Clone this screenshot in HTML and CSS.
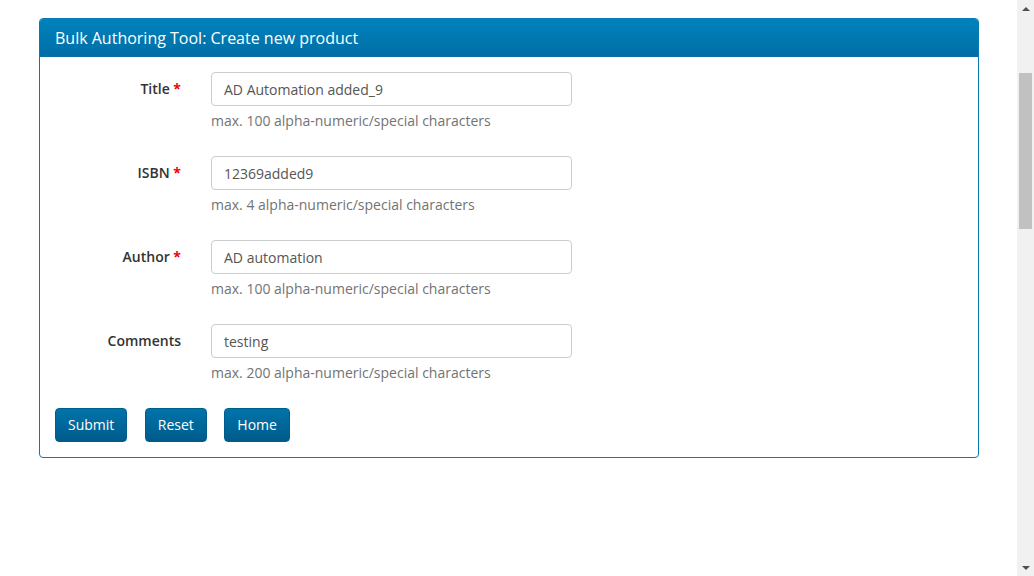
FILE: index.html
```html
<!DOCTYPE html>
<html>
<head>
<meta charset="utf-8">
<link rel="stylesheet" href="styles.css">
</head>
<body>
<div class="page">
  <div class="container">
    <div class="panel">
      <div class="panel-heading">Bulk Authoring Tool: Create new product</div>
      <div class="panel-body">
        <div class="form-group">
          <label class="control-label">Title <span class="req">*</span></label>
          <div class="field">
            <input class="form-control" type="text" value="AD Automation added_9">
            <span class="help-block">max. 100 alpha-numeric/special characters</span>
          </div>
        </div>
        <div class="form-group">
          <label class="control-label">ISBN <span class="req">*</span></label>
          <div class="field">
            <input class="form-control" type="text" value="12369added9">
            <span class="help-block">max. 4 alpha-numeric/special characters</span>
          </div>
        </div>
        <div class="form-group">
          <label class="control-label">Author <span class="req">*</span></label>
          <div class="field">
            <input class="form-control" type="text" value="AD automation">
            <span class="help-block">max. 100 alpha-numeric/special characters</span>
          </div>
        </div>
        <div class="form-group">
          <label class="control-label">Comments</label>
          <div class="field">
            <input class="form-control" type="text" value="testing">
            <span class="help-block">max. 200 alpha-numeric/special characters</span>
          </div>
        </div>
        <div class="actions">
          <button class="btn" type="button">Submit</button>
          <button class="btn" type="button">Reset</button>
          <button class="btn" type="button">Home</button>
        </div>
      </div>
    </div>
  </div>
</div>
<div class="scrollbar">
  <div class="sb-btn"><span class="arrow-up"></span></div>
  <div class="sb-track"><div class="sb-thumb"></div></div>
  <div class="sb-btn"><span class="arrow-down"></span></div>
</div>
</body>
</html>
```

FILE: styles.css
```css
html, body {
  margin: 0;
  padding: 0;
  height: 100%;
  overflow: hidden;
}
body {
  display: flex;
  font-family: "Open Sans", "DejaVu Sans", sans-serif;
  font-size: 14px;
  color: #333;
  background: #fff;
}
.page {
  flex: 1;
  min-width: 0;
}
.container {
  width: 940px;
  margin: 18px auto 0;
  padding-left: 1px;
}
.panel {
  border: 1px solid #0a7ab5;
  border-radius: 4px;
  overflow: hidden;
}
.panel-heading {
  box-sizing: border-box;
  display: flex;
  align-items: center;
  color: #fff;
  font-size: 16px;
  background: linear-gradient(to bottom, #0083bd, #006ea6);
  border-bottom: 1px solid #0a6fa5;
  margin-top: -1px;
  height: 39px;
  padding: 0 15px;
  padding-top: 1px;
}
.panel-body {
  padding: 15px;
}
.form-group {
  display: flex;
  margin-bottom: 25px;
}
.control-label {
  width: 126px;
  text-align: right;
  padding-top: 7px;
  line-height: 20px;
  font-weight: 600;
  color: #333;
  margin-right: 30px;
}
.req {
  color: #e00;
  font-weight: 700;
}
.field {
  display: flex;
  flex-direction: column;
}
.form-control {
  width: 361px;
  height: 34px;
  box-sizing: border-box;
  border: 1px solid #ccc;
  border-radius: 4px;
  padding: 6px 12px;
  font-family: "Open Sans", "DejaVu Sans", sans-serif;
  font-size: 14px;
  color: #555;
  margin: 0;
  outline: none;
}
.help-block {
  display: block;
  margin-top: 5px;
  line-height: 20px;
  color: #737373;
}
.actions {
  display: flex;
  gap: 17.5px;
}
.btn {
  height: 34px;
  padding: 0 12px;
  border: 1px solid #005c8d;
  border-radius: 4px;
  background: linear-gradient(to bottom, #0074aa, #005b8b);
  color: #fff;
  font-family: "Open Sans", "DejaVu Sans", sans-serif;
  font-size: 14px;
  line-height: 20px;
  cursor: pointer;
}
.scrollbar {
  width: 17px;
  height: 100%;
  background: #f1f1f1;
  display: flex;
  flex-direction: column;
  flex-shrink: 0;
}
.sb-btn {
  height: 17px;
  display: flex;
  align-items: center;
  justify-content: center;
}
.sb-track {
  flex: 1;
  padding-top: 56px;
}
.sb-thumb {
  height: 156px;
  margin: 0 2px;
  background: #c1c1c1;
}
.arrow-up {
  width: 0;
  height: 0;
  border-left: 4px solid transparent;
  border-right: 4px solid transparent;
  border-bottom: 4px solid #505050;
}
.arrow-down {
  width: 0;
  height: 0;
  border-left: 4px solid transparent;
  border-right: 4px solid transparent;
  border-top: 4px solid #505050;
}
```
